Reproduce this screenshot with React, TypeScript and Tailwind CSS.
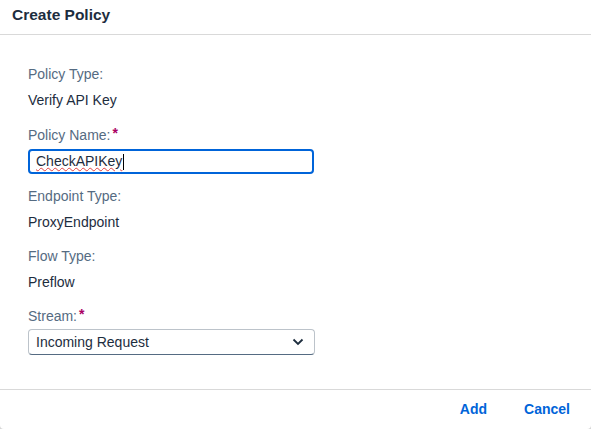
import React from "react";

const font = { fontFamily: '"Liberation Sans", Arial, sans-serif' };

function Label({ text, required, className = "" }: { text: string; required?: boolean; className?: string }) {
  return (
    <div className={`h-5 leading-5 text-[14px] text-[#556b82] ${className}`}>
      {text}
      {required && <span className="text-[#aa0063] font-bold ml-[2px] relative -top-[2px]">*</span>}
    </div>
  );
}

function Value({ text, className = "" }: { text: string; className?: string }) {
  return <div className={`h-5 leading-5 text-[14px] text-[#1d2d3e] ${className}`}>{text}</div>;
}

export default function App() {
  return (
    <div className="w-[591px] h-[429px] bg-[#d6d6d6]" style={font}>
      <div className="w-full h-full bg-white rounded-b-[4px] flex flex-col">
        <div className="h-[35px] border-b border-[#d9d9d9] px-3 flex items-center">
          <span className="text-[15.5px] font-bold text-[#1d2d3e] -mt-[4px]">Create Policy</span>
        </div>
        <div className="flex-1 pl-[28px] pt-[29px]">
          <Label text="Policy Type:" />
          <Value text="Verify API Key" className="mt-[6px]" />
          <Label text="Policy Name:" required className="mt-[15px]" />
          <div className="mt-[4px] w-[286px] h-[25px] border-2 border-[#0064d9] rounded-[4px] flex items-center px-[6px]">
            <span className="text-[14px] text-[#1d2d3e] underline decoration-wavy decoration-[#e34242] decoration-[1px] underline-offset-[1px]">
              CheckAPIKey
            </span>
            <span className="w-px h-[16px] bg-black ml-px" />
          </div>
          <Label text="Endpoint Type:" className="mt-[12px]" />
          <Value text="ProxyEndpoint" className="mt-[6px]" />
          <Label text="Flow Type:" className="mt-[14px]" />
          <Value text="Preflow" className="mt-[6px]" />
          <Label text="Stream:" required className="mt-[14px]" />
          <div className="mt-[3px] w-[287px] h-[26px] border border-[#bcc3ca] border-b-[#556b82] rounded-[4px] flex items-center justify-between pl-[7px] pr-[10px]">
            <span className="text-[14px] text-[#1d2d3e]">Incoming Request</span>
            <svg width="12" height="8" viewBox="0 0 12 8">
              <polyline points="1.5,1.5 6,6 10.5,1.5" fill="none" stroke="#1d2d3e" strokeWidth="1.8" />
            </svg>
          </div>
        </div>
        <div className="h-[40px] border-t border-[#d9d9d9] flex items-center justify-end pr-[21px] gap-[37px]">
          <span className="text-[14px] font-bold text-[#0064d9]">Add</span>
          <span className="text-[14px] font-bold text-[#0064d9]">Cancel</span>
        </div>
      </div>
    </div>
  );
}
